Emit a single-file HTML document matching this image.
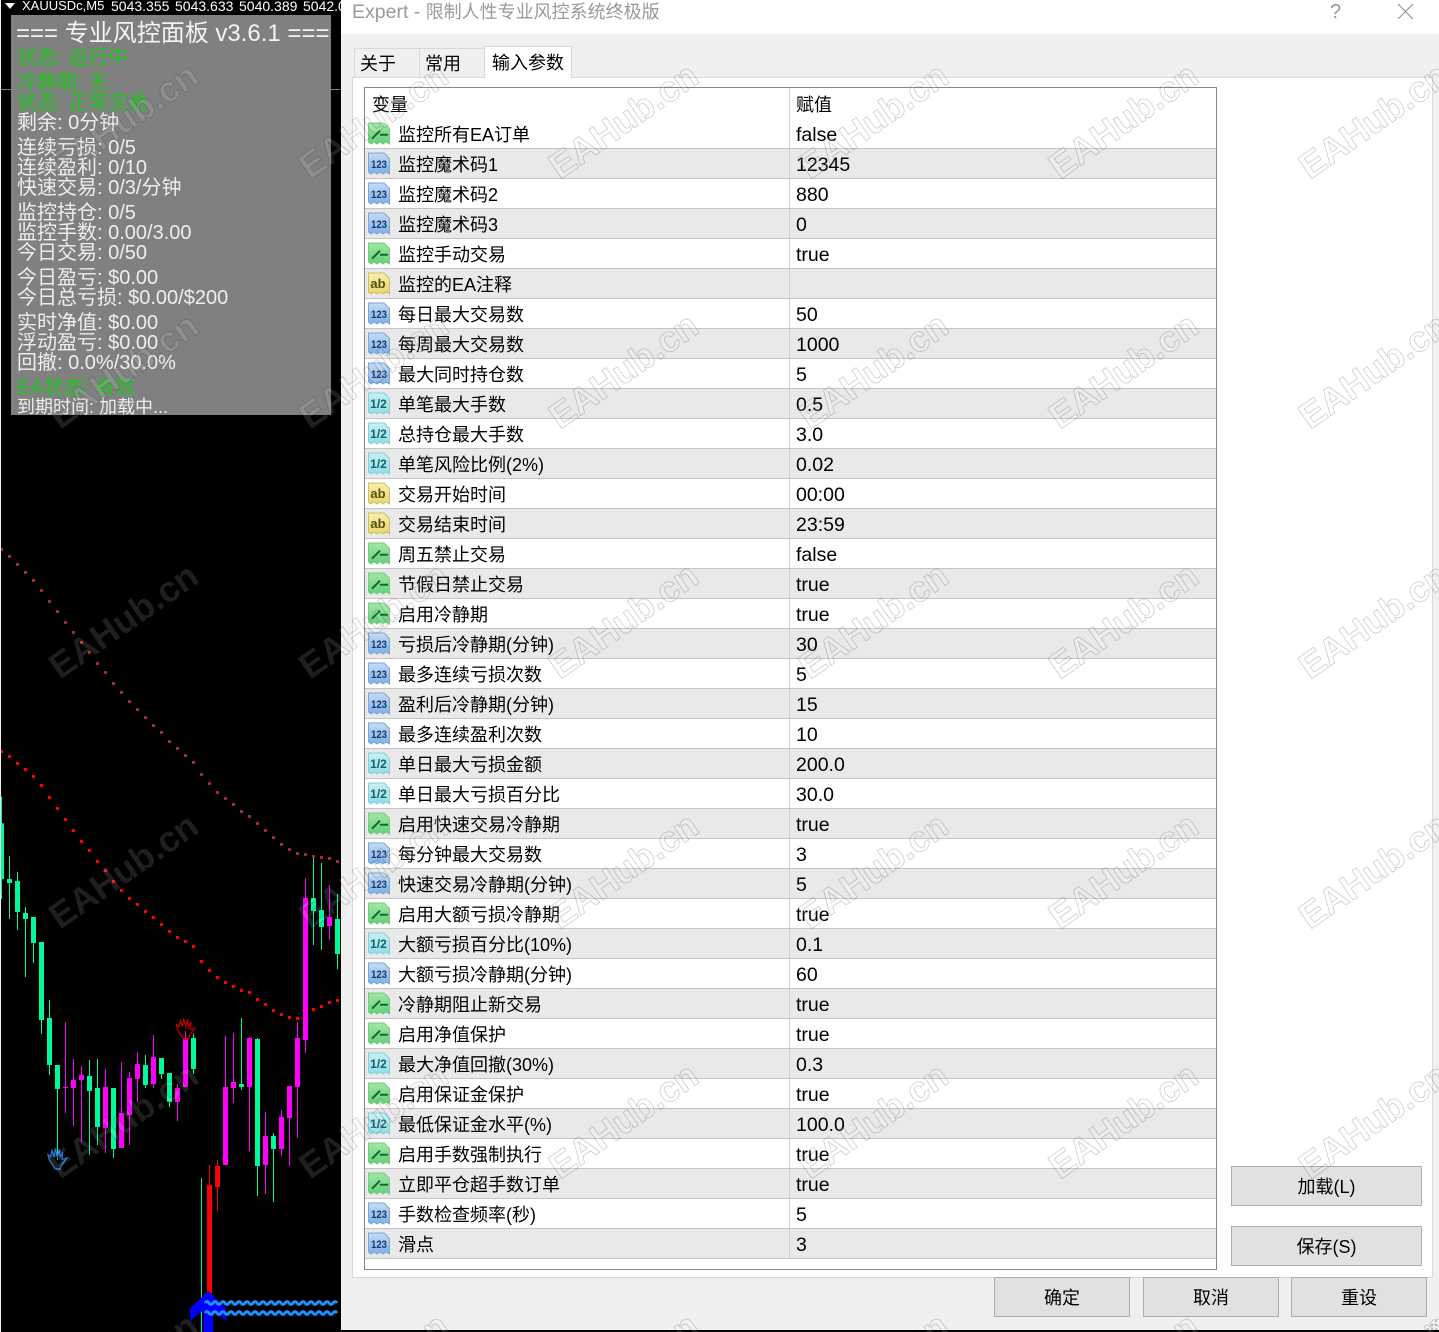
<!DOCTYPE html>
<html lang="zh"><head><meta charset="utf-8"><title>Expert</title>
<style>
html,body{margin:0;padding:0;background:#000}
#p{position:relative;width:1439px;height:1332px;overflow:hidden;background:#000;font-family:"Liberation Sans","Noto Sans CJK SC",sans-serif}
.abs,#p>div{position:absolute}
#lm{left:0;top:0;width:1px;height:1332px;background:#eee}
#hd{left:0;top:-1px;height:15px;color:#fff;font-size:13px;line-height:14px;white-space:nowrap}
#hd span{position:absolute;top:0;font-size:14px}
#pn{left:11px;top:15px;width:320px;height:400px;background:#808080;color:#eee;overflow:hidden}
#pn p{position:absolute;left:6px;margin:0;font-size:20px;line-height:24px;white-space:nowrap}
#pn .g{color:#1fc41f}
#dlg{left:341px;top:0;width:1098px;height:1330px;background:#f0f0f0}
#tb{left:341px;top:0;width:1098px;height:34px;background:#fff}
#ttl{left:352px;top:-1px;font-size:18px;line-height:26px;color:#9a9a9a;white-space:nowrap}
#ttl span{font-size:19.5px}
#q{left:1330px;top:0;font-size:20px;line-height:24px;color:#999}
#tp{left:352px;top:77px;width:1079px;height:1199px;background:#fff;border:1px solid #d9d9d9}
.tab{height:29px;background:#f0f0f0;border:1px solid #d9d9d9;border-bottom:0;font-size:18px;line-height:30px;padding-left:5px;color:#000;box-sizing:border-box}
#tbl{left:364px;top:87px;width:851px;height:1181px;border:1px solid #85858d;background:#fff;overflow:hidden}
#hdr{height:31px;font-size:18px;line-height:35px;position:relative}
#hdr span{position:absolute;top:0}
.r{position:relative;height:30px;box-sizing:border-box;border-bottom:1px solid #c4c4c4;font-size:18px;line-height:33px;color:#000;white-space:nowrap}
.e{background:#e9e9e9}
.r svg{position:absolute;left:2px;top:2px;width:24px;height:24px}
.r b{position:absolute;left:33px;top:0;font-weight:400}
.r u{position:absolute;left:431px;top:0;text-decoration:none;font-size:19.5px}
#cl{left:789px;top:88px;width:1px;height:1170px;background:#cfcfcf}
.btn{background:#e1e1e1;border:1px solid #adadad;box-sizing:border-box;font-size:18px;text-align:center;color:#000;line-height:40px}
#wm{left:0;top:0}
</style></head><body><div id="p">
<svg width="0" height="0" style="position:absolute"><defs>
<linearGradient id="gg" x1="0" y1="0" x2="0" y2="1"><stop offset="0" stop-color="#a0e8a4"/><stop offset="1" stop-color="#62d078"/></linearGradient>
<linearGradient id="gb" x1="0" y1="0" x2="0" y2="1"><stop offset="0" stop-color="#c6dcf6"/><stop offset="1" stop-color="#7eaee4"/></linearGradient>
<linearGradient id="gc" x1="0" y1="0" x2="0" y2="1"><stop offset="0" stop-color="#c8f0f4"/><stop offset="1" stop-color="#90dde6"/></linearGradient>
<linearGradient id="gy" x1="0" y1="0" x2="0" y2="1"><stop offset="0" stop-color="#f6eeb0"/><stop offset="1" stop-color="#e6d670"/></linearGradient>
<symbol id="g" viewBox="0 0 24 24"><path d="M1.5 2H17L22.5 7.5V23L19 21 16 23 13 21 10 23 7 21 4 23 1.5 21Z" fill="url(#gg)" stroke="#7cc88a"/><path d="M5 17.7 13 9.7M13 13.7H21" stroke="#14682e" stroke-width="2" fill="none"/></symbol>
<symbol id="n" viewBox="0 0 24 24"><path d="M1.5 2H17L22.5 7.5V23L19 21 16 23 13 21 10 23 7 21 4 23 1.5 21Z" fill="url(#gb)" stroke="#7ba6d6"/><text x="4" y="17" textLength="16" lengthAdjust="spacingAndGlyphs" font-family="Liberation Sans" font-weight="700" font-size="11" fill="#123a70">123</text></symbol>
<symbol id="d" viewBox="0 0 24 24"><path d="M1.5 2H17L22.5 7.5V23L19 21 16 23 13 21 10 23 7 21 4 23 1.5 21Z" fill="url(#gc)" stroke="#86cfd8"/><text x="11.5" y="17" text-anchor="middle" font-family="Liberation Sans" font-weight="700" font-size="12" fill="#14606c">1/2</text></symbol>
<symbol id="a" viewBox="0 0 24 24"><path d="M1.5 2H17L22.5 7.5V23L19 21 16 23 13 21 10 23 7 21 4 23 1.5 21Z" fill="url(#gy)" stroke="#cfc060"/><text x="11" y="17" text-anchor="middle" font-family="Liberation Sans" font-weight="700" font-size="13" fill="#5c5008">ab</text></symbol>
<pattern id="wt" width="250" height="250" patternUnits="userSpaceOnUse"><text transform="translate(60,180) rotate(-35)" font-family="Liberation Sans" font-weight="700" font-size="36" fill="rgba(255,255,255,.12)" stroke="rgba(0,0,0,.2)" stroke-width=".8">EAHub.cn</text></pattern>
</defs></svg>

<svg class="abs" style="position:absolute;left:0;top:0" width="341" height="1332" viewBox="0 0 341 1332">
<rect x="1" y="89" width="339" height="1" fill="#808080"/>
<g fill="#a52a2a"><rect x="0" y="548" width="3" height="3"/><rect x="8" y="555" width="3" height="3"/><rect x="16" y="563" width="3" height="3"/><rect x="24" y="571" width="3" height="3"/><rect x="32" y="579" width="3" height="3"/><rect x="40" y="589" width="3" height="3"/><rect x="48" y="600" width="3" height="3"/><rect x="56" y="610" width="3" height="3"/><rect x="64" y="621" width="3" height="3"/><rect x="72" y="631" width="3" height="3"/><rect x="80" y="641" width="3" height="3"/><rect x="88" y="651" width="3" height="3"/><rect x="96" y="662" width="3" height="3"/><rect x="104" y="671" width="3" height="3"/><rect x="112" y="682" width="3" height="3"/><rect x="120" y="691" width="3" height="3"/><rect x="128" y="700" width="3" height="3"/><rect x="136" y="708" width="3" height="3"/><rect x="144" y="716" width="3" height="3"/><rect x="152" y="724" width="3" height="3"/><rect x="160" y="731" width="3" height="3"/><rect x="168" y="740" width="3" height="3"/><rect x="176" y="747" width="3" height="3"/><rect x="184" y="754" width="3" height="3"/><rect x="192" y="761" width="3" height="3"/><rect x="200" y="773" width="3" height="3"/><rect x="208" y="782" width="3" height="3"/><rect x="216" y="791" width="3" height="3"/><rect x="224" y="797" width="3" height="3"/><rect x="232" y="803" width="3" height="3"/><rect x="240" y="810" width="3" height="3"/><rect x="248" y="815" width="3" height="3"/><rect x="256" y="822" width="3" height="3"/><rect x="264" y="829" width="3" height="3"/><rect x="272" y="836" width="3" height="3"/><rect x="280" y="843" width="3" height="3"/><rect x="288" y="848" width="3" height="3"/><rect x="296" y="852" width="3" height="3"/><rect x="304" y="853" width="3" height="3"/><rect x="312" y="855" width="3" height="3"/><rect x="320" y="856" width="3" height="3"/><rect x="328" y="857" width="3" height="3"/><rect x="336" y="860" width="3" height="3"/></g>
<g fill="#f00"><rect x="0" y="750" width="3" height="3"/><rect x="8" y="755" width="3" height="3"/><rect x="16" y="762" width="3" height="3"/><rect x="24" y="768" width="3" height="3"/><rect x="32" y="775" width="3" height="3"/><rect x="40" y="784" width="3" height="3"/><rect x="48" y="796" width="3" height="3"/><rect x="56" y="807" width="3" height="3"/><rect x="64" y="818" width="3" height="3"/><rect x="72" y="829" width="3" height="3"/><rect x="80" y="840" width="3" height="3"/><rect x="88" y="849" width="3" height="3"/><rect x="96" y="860" width="3" height="3"/><rect x="104" y="869" width="3" height="3"/><rect x="112" y="880" width="3" height="3"/><rect x="120" y="889" width="3" height="3"/><rect x="128" y="897" width="3" height="3"/><rect x="136" y="903" width="3" height="3"/><rect x="144" y="910" width="3" height="3"/><rect x="152" y="916" width="3" height="3"/><rect x="160" y="923" width="3" height="3"/><rect x="168" y="930" width="3" height="3"/><rect x="176" y="936" width="3" height="3"/><rect x="184" y="940" width="3" height="3"/><rect x="192" y="945" width="3" height="3"/><rect x="200" y="960" width="3" height="3"/><rect x="208" y="969" width="3" height="3"/><rect x="216" y="976" width="3" height="3"/><rect x="224" y="981" width="3" height="3"/><rect x="232" y="985" width="3" height="3"/><rect x="240" y="989" width="3" height="3"/><rect x="248" y="991" width="3" height="3"/><rect x="256" y="998" width="3" height="3"/><rect x="264" y="1003" width="3" height="3"/><rect x="272" y="1009" width="3" height="3"/><rect x="280" y="1013" width="3" height="3"/><rect x="288" y="1016" width="3" height="3"/><rect x="296" y="1017" width="3" height="3"/><rect x="304" y="1012" width="3" height="3"/><rect x="312" y="1008" width="3" height="3"/><rect x="320" y="1005" width="3" height="3"/><rect x="328" y="1001" width="3" height="3"/><rect x="336" y="999" width="3" height="3"/></g>
<g transform="translate(0,840) scale(.33333)">
<g fill="#00fa9a">
<rect x="3" y="-130" width="3" height="307"/><rect x="6" y="-50" width="6" height="167"/>
<rect x="27" y="48" width="3" height="189"/><rect x="21" y="117" width="15" height="12"/>
<rect x="51" y="96" width="3" height="174"/><rect x="45" y="123" width="15" height="93"/>
<rect x="75" y="201" width="3" height="210"/><rect x="69" y="219" width="15" height="18"/>
<rect x="99" y="231" width="3" height="138"/><rect x="93" y="231" width="15" height="78"/>
<rect x="123" y="306" width="3" height="276"/><rect x="117" y="306" width="15" height="234"/>
<rect x="147" y="480" width="3" height="225"/><rect x="141" y="534" width="15" height="141"/>
<rect x="171" y="675" width="3" height="285"/><rect x="165" y="675" width="15" height="72"/>
<rect x="267" y="660" width="3" height="285"/><rect x="261" y="708" width="15" height="45"/>
<rect x="291" y="657" width="3" height="258"/><rect x="285" y="744" width="15" height="117"/>
<rect x="339" y="744" width="3" height="210"/><rect x="333" y="744" width="15" height="183"/>
<rect x="435" y="645" width="3" height="99"/><rect x="429" y="675" width="15" height="60"/>
<rect x="483" y="654" width="3" height="63"/><rect x="477" y="654" width="15" height="48"/>
<rect x="507" y="699" width="3" height="102"/><rect x="501" y="699" width="15" height="87"/>
<rect x="579" y="580" width="3" height="122"/><rect x="573" y="594" width="15" height="93"/>
<rect x="603" y="1014" width="3" height="462"/>
<rect x="723" y="534" width="3" height="216"/><rect x="717" y="732" width="15" height="9"/>
<rect x="771" y="594" width="3" height="474"/><rect x="765" y="597" width="15" height="381"/>
<rect x="819" y="879" width="3" height="207"/><rect x="813" y="888" width="15" height="39"/>
<rect x="939" y="54" width="3" height="261"/><rect x="933" y="174" width="15" height="39"/>
<rect x="963" y="69" width="3" height="261"/><rect x="957" y="210" width="15" height="51"/>
<rect x="1011" y="162" width="3" height="225"/><rect x="1005" y="237" width="15" height="105"/>
</g>
<g fill="#f0f">
<rect x="195" y="546" width="3" height="273"/><rect x="189" y="741" width="15" height="3"/>
<rect x="219" y="657" width="3" height="201"/><rect x="213" y="720" width="15" height="24"/>
<rect x="243" y="678" width="3" height="228"/><rect x="237" y="705" width="15" height="15"/>
<rect x="315" y="687" width="3" height="252"/><rect x="309" y="741" width="15" height="123"/>
<rect x="363" y="666" width="3" height="258"/><rect x="357" y="819" width="15" height="105"/>
<rect x="387" y="696" width="3" height="219"/><rect x="381" y="714" width="15" height="111"/>
<rect x="411" y="636" width="3" height="150"/><rect x="405" y="672" width="15" height="45"/>
<rect x="459" y="585" width="3" height="159"/><rect x="453" y="651" width="15" height="81"/>
<rect x="531" y="732" width="3" height="111"/><rect x="525" y="744" width="15" height="42"/>
<rect x="555" y="573" width="3" height="168"/><rect x="549" y="594" width="15" height="147"/>
<rect x="675" y="588" width="3" height="387"/><rect x="669" y="741" width="15" height="234"/>
<rect x="699" y="579" width="3" height="210"/><rect x="693" y="726" width="15" height="18"/>
<rect x="747" y="591" width="3" height="342"/><rect x="741" y="594" width="15" height="147"/>
<rect x="795" y="816" width="3" height="246"/><rect x="789" y="888" width="15" height="87"/>
<rect x="843" y="810" width="3" height="138"/><rect x="837" y="831" width="15" height="96"/>
<rect x="867" y="738" width="3" height="240"/><rect x="861" y="738" width="15" height="96"/>
<rect x="891" y="546" width="3" height="348"/><rect x="885" y="594" width="15" height="147"/>
<rect x="915" y="114" width="3" height="525"/><rect x="909" y="174" width="15" height="426"/>
<rect x="987" y="135" width="3" height="165"/><rect x="981" y="231" width="15" height="27"/>
</g>
<g fill="#f00"><rect x="627" y="975" width="3" height="385"/><rect x="621" y="1035" width="15" height="325"/><rect x="651" y="960" width="3" height="153"/><rect x="645" y="978" width="15" height="63"/></g>
<path d="M-5 28-22 2-26-14-18-8-14-26-8-8-4-32 2-8 8-30 10-6 18-22 16 0 30-4 14 18 10 30Z" transform="translate(555,568)" fill="none" stroke="#b00000" stroke-width="4"/>
<path d="M-5 28-22 2-26-14-18-8-14-26-8-8-4-32 2-8 8-30 10-6 18-22 16 0 30-4 14 18 10 30Z" transform="translate(170,958)" fill="none" stroke="#1f78d8" stroke-width="4"/>
<path d="M570 1405 625 1353 678 1405V1443L640 1410V1476H610V1410L570 1443Z" fill="#00f"/>
<path d="M615 1389q6-8 12 0t12 0 12 0 12 0 12 0 12 0 12 0 12 0 12 0 12 0 12 0 12 0 12 0 12 0 12 0 12 0 12 0 12 0 12 0 12 0 12 0 12 0 12 0 12 0 12 0 12 0 12 0 12 0 12 0 12 0 12 0 12 0 12 0" fill="none" stroke="#1e90ff" stroke-width="9"/>
<path d="M615 1419q6-8 12 0t12 0 12 0 12 0 12 0 12 0 12 0 12 0 12 0 12 0 12 0 12 0 12 0 12 0 12 0 12 0 12 0 12 0 12 0 12 0 12 0 12 0 12 0 12 0 12 0 12 0 12 0 12 0 12 0 12 0 12 0 12 0 12 0" fill="none" stroke="#1e90ff" stroke-width="9"/>
</g>
<path d="M5 3H15L10 9Z" fill="#fff"/>
</svg>
<div id="lm"></div>
<div id="hd"><span style="left:22px;font-size:13px">XAUUSDc,M5</span><span style="left:111px">5043.355</span><span style="left:175px">5043.633</span><span style="left:239px">5040.389</span><span style="left:303px">5042.0</span></div>

<div id="pn">
<p style="top:4px;font-size:24px;line-height:30px;left:5px;color:#f4f4f4">=== 专业风控面板 v3.6.1 ===</p>
<p class="g" style="top:31px">状态: 运行中</p>
<p class="g" style="top:56px">冷静期: 无</p>
<p class="g" style="top:76px">状态: 正常交易</p>
<p style="top:96px">剩余: 0分钟</p>
<p style="top:121px">连续亏损: 0/5</p>
<p style="top:141px">连续盈利: 0/10</p>
<p style="top:161px">快速交易: 0/3/分钟</p>
<p style="top:186px">监控持仓: 0/5</p>
<p style="top:206px">监控手数: 0.00/3.00</p>
<p style="top:226px">今日交易: 0/50</p>
<p style="top:251px">今日盈亏: $0.00</p>
<p style="top:271px">今日总亏损: $0.00/$200</p>
<p style="top:296px">实时净值: $0.00</p>
<p style="top:316px">浮动盈亏: $0.00</p>
<p style="top:336px">回撤: 0.0%/30.0%</p>
<p class="g" style="top:361px">EA状态: 有效</p>
<p style="top:380px;font-size:18px">到期时间: 加载中...</p>
</div>

<div id="dlg"></div>
<div id="tb"></div>
<div id="ttl"><span>Expert - </span>限制人性专业风控系统终极版</div>
<div id="q">?</div>
<svg style="position:absolute;left:1397px;top:3px" width="17" height="17"><path d="M1 1 16 16M16 1 1 16" stroke="#8a8a8a" fill="none"/></svg>

<div id="tp"></div>
<div class="tab" style="left:354px;top:48px;width:66px">关于</div>
<div class="tab" style="left:419px;top:48px;width:66px">常用</div>
<div class="tab" style="left:484px;top:46px;width:88px;height:32px;background:#fff;line-height:32px;padding-left:7px">输入参数</div>

<div id="tbl">
<div id="hdr"><span style="left:7px">变量</span><span style="left:431px">赋值</span></div>
<div class="r"><svg><use href="#g"/></svg><b>监控所有EA订单</b><u>false</u></div>
<div class="r e"><svg><use href="#n"/></svg><b>监控魔术码1</b><u>12345</u></div>
<div class="r"><svg><use href="#n"/></svg><b>监控魔术码2</b><u>880</u></div>
<div class="r e"><svg><use href="#n"/></svg><b>监控魔术码3</b><u>0</u></div>
<div class="r"><svg><use href="#g"/></svg><b>监控手动交易</b><u>true</u></div>
<div class="r e"><svg><use href="#a"/></svg><b>监控的EA注释</b><u></u></div>
<div class="r"><svg><use href="#n"/></svg><b>每日最大交易数</b><u>50</u></div>
<div class="r e"><svg><use href="#n"/></svg><b>每周最大交易数</b><u>1000</u></div>
<div class="r"><svg><use href="#n"/></svg><b>最大同时持仓数</b><u>5</u></div>
<div class="r e"><svg><use href="#d"/></svg><b>单笔最大手数</b><u>0.5</u></div>
<div class="r"><svg><use href="#d"/></svg><b>总持仓最大手数</b><u>3.0</u></div>
<div class="r e"><svg><use href="#d"/></svg><b>单笔风险比例(2%)</b><u>0.02</u></div>
<div class="r"><svg><use href="#a"/></svg><b>交易开始时间</b><u>00:00</u></div>
<div class="r e"><svg><use href="#a"/></svg><b>交易结束时间</b><u>23:59</u></div>
<div class="r"><svg><use href="#g"/></svg><b>周五禁止交易</b><u>false</u></div>
<div class="r e"><svg><use href="#g"/></svg><b>节假日禁止交易</b><u>true</u></div>
<div class="r"><svg><use href="#g"/></svg><b>启用冷静期</b><u>true</u></div>
<div class="r e"><svg><use href="#n"/></svg><b>亏损后冷静期(分钟)</b><u>30</u></div>
<div class="r"><svg><use href="#n"/></svg><b>最多连续亏损次数</b><u>5</u></div>
<div class="r e"><svg><use href="#n"/></svg><b>盈利后冷静期(分钟)</b><u>15</u></div>
<div class="r"><svg><use href="#n"/></svg><b>最多连续盈利次数</b><u>10</u></div>
<div class="r e"><svg><use href="#d"/></svg><b>单日最大亏损金额</b><u>200.0</u></div>
<div class="r"><svg><use href="#d"/></svg><b>单日最大亏损百分比</b><u>30.0</u></div>
<div class="r e"><svg><use href="#g"/></svg><b>启用快速交易冷静期</b><u>true</u></div>
<div class="r"><svg><use href="#n"/></svg><b>每分钟最大交易数</b><u>3</u></div>
<div class="r e"><svg><use href="#n"/></svg><b>快速交易冷静期(分钟)</b><u>5</u></div>
<div class="r"><svg><use href="#g"/></svg><b>启用大额亏损冷静期</b><u>true</u></div>
<div class="r e"><svg><use href="#d"/></svg><b>大额亏损百分比(10%)</b><u>0.1</u></div>
<div class="r"><svg><use href="#n"/></svg><b>大额亏损冷静期(分钟)</b><u>60</u></div>
<div class="r e"><svg><use href="#g"/></svg><b>冷静期阻止新交易</b><u>true</u></div>
<div class="r"><svg><use href="#g"/></svg><b>启用净值保护</b><u>true</u></div>
<div class="r e"><svg><use href="#d"/></svg><b>最大净值回撤(30%)</b><u>0.3</u></div>
<div class="r"><svg><use href="#g"/></svg><b>启用保证金保护</b><u>true</u></div>
<div class="r e"><svg><use href="#d"/></svg><b>最低保证金水平(%)</b><u>100.0</u></div>
<div class="r"><svg><use href="#g"/></svg><b>启用手数强制执行</b><u>true</u></div>
<div class="r e"><svg><use href="#g"/></svg><b>立即平仓超手数订单</b><u>true</u></div>
<div class="r"><svg><use href="#n"/></svg><b>手数检查频率(秒)</b><u>5</u></div>
<div class="r e"><svg><use href="#n"/></svg><b>滑点</b><u>3</u></div>
</div>
<div id="cl"></div>

<div class="btn" style="left:1231px;top:1166px;width:191px;height:40px">加载(L)</div>
<div class="btn" style="left:1231px;top:1226px;width:191px;height:40px">保存(S)</div>
<div class="btn" style="left:994px;top:1277px;width:136px;height:40px">确定</div>
<div class="btn" style="left:1143px;top:1277px;width:136px;height:40px">取消</div>
<div class="btn" style="left:1291px;top:1277px;width:136px;height:40px">重设</div>

<svg id="wm" style="position:absolute;left:0;top:0;pointer-events:none" width="1439" height="1332" viewBox="0 0 1439 1332"><rect width="1439" height="1332" fill="url(#wt)"/></svg>
<svg style="position:absolute;left:1427px;top:1319px" width="12" height="11"><g fill="#bbb"><rect x="8" y="1" width="2" height="2"/><rect x="4" y="5" width="2" height="2"/><rect x="8" y="5" width="2" height="2"/><rect x="0" y="9" width="2" height="2"/><rect x="4" y="9" width="2" height="2"/><rect x="8" y="9" width="2" height="2"/></g></svg>
</div></body></html>
